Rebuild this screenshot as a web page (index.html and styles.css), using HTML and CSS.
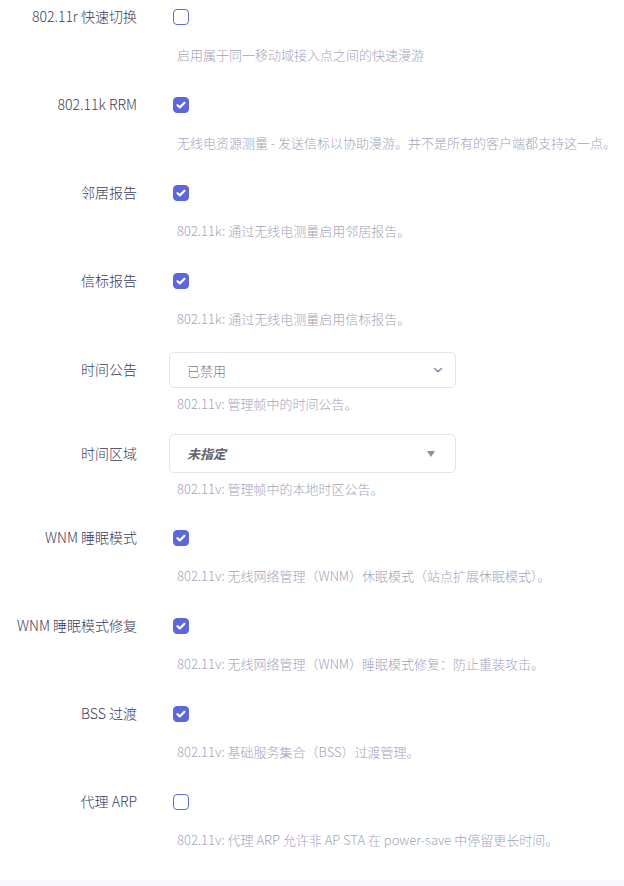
FILE: index.html
```html
<!DOCTYPE html>
<html lang="zh-CN">
<head>
<meta charset="utf-8">
<link rel="stylesheet" href="styles.css">
</head>
<body>
<div class="page">
  <div class="row">
    <div class="label">802.11r 快速切换</div>
    <div class="field">
      <div class="ctrl"><span class="cb"></span></div>
      <div class="desc">启用属于同一移动域接入点之间的快速漫游</div>
    </div>
  </div>
  <div class="row">
    <div class="label">802.11k RRM</div>
    <div class="field">
      <div class="ctrl"><span class="cb on"><svg viewBox="0 0 16 16"><path d="M4.5 8.2l2.3 2.2 4.7-4.7" /></svg></span></div>
      <div class="desc">无线电资源测量 - 发送信标以协助漫游。并不是所有的客户端都支持这一点。</div>
    </div>
  </div>
  <div class="row">
    <div class="label">邻居报告</div>
    <div class="field">
      <div class="ctrl"><span class="cb on"><svg viewBox="0 0 16 16"><path d="M4.5 8.2l2.3 2.2 4.7-4.7" /></svg></span></div>
      <div class="desc">802.11k: 通过无线电测量启用邻居报告。</div>
    </div>
  </div>
  <div class="row">
    <div class="label">信标报告</div>
    <div class="field">
      <div class="ctrl"><span class="cb on"><svg viewBox="0 0 16 16"><path d="M4.5 8.2l2.3 2.2 4.7-4.7" /></svg></span></div>
      <div class="desc">802.11k: 通过无线电测量启用信标报告。</div>
    </div>
  </div>
  <div class="row row-sel">
    <div class="label lab-sel">时间公告</div>
    <div class="field">
      <div class="select">
        <span class="sel-text">已禁用</span>
        <svg class="chev" viewBox="0 0 12 12"><path d="M2.5 4.5l3.5 3.2 3.5-3.2"/></svg>
      </div>
      <div class="desc desc-sel">802.11v: 管理帧中的时间公告。</div>
    </div>
  </div>
  <div class="row row-sel2">
    <div class="label lab-sel2">时间区域</div>
    <div class="field">
      <div class="select select2">
        <span class="sel-text2">未指定</span>
        <span class="tri"></span>
      </div>
      <div class="desc desc-sel">802.11v: 管理帧中的本地时区公告。</div>
    </div>
  </div>
  <div class="row">
    <div class="label">WNM 睡眠模式</div>
    <div class="field">
      <div class="ctrl"><span class="cb on"><svg viewBox="0 0 16 16"><path d="M4.5 8.2l2.3 2.2 4.7-4.7" /></svg></span></div>
      <div class="desc">802.11v: 无线网络管理（WNM）休眠模式（站点扩展休眠模式）。</div>
    </div>
  </div>
  <div class="row">
    <div class="label">WNM 睡眠模式修复</div>
    <div class="field">
      <div class="ctrl"><span class="cb on"><svg viewBox="0 0 16 16"><path d="M4.5 8.2l2.3 2.2 4.7-4.7" /></svg></span></div>
      <div class="desc">802.11v: 无线网络管理（WNM）睡眠模式修复：防止重装攻击。</div>
    </div>
  </div>
  <div class="row">
    <div class="label">BSS 过渡</div>
    <div class="field">
      <div class="ctrl"><span class="cb on"><svg viewBox="0 0 16 16"><path d="M4.5 8.2l2.3 2.2 4.7-4.7" /></svg></span></div>
      <div class="desc">802.11v: 基础服务集合（BSS）过渡管理。</div>
    </div>
  </div>
  <div class="row row-last">
    <div class="label">代理 ARP</div>
    <div class="field">
      <div class="ctrl"><span class="cb"></span></div>
      <div class="desc">802.11v: 代理 ARP 允许非 AP STA 在 power-save 中停留更长时间。</div>
    </div>
  </div>
</div>
<div class="band"></div>
</body>
</html>
```
FILE: styles.css
```css
html, body {
  margin: 0;
  padding: 0;
  background: #ffffff;
}
body {
  font-family: "Noto Sans CJK SC", Inter, sans-serif;
  color: #3d3d5e;
}
.page {
  height: 880px;
  background: #ffffff;
  overflow: hidden;
}
.band {
  height: 6px;
  background: #f7f7fc;
}
.row {
  display: grid;
  grid-template-columns: 169px 1fr;
  margin-bottom: 24px;
}
.label {
  text-align: right;
  padding-right: 32px;
  font-size: 14px;
  font-weight: 300;
  line-height: 33px;
  color: #3b3b5c;
  white-space: nowrap;
}
.field {
  display: flex;
  flex-direction: column;
}
.ctrl {
  height: 34px;
  display: flex;
  align-items: center;
  padding-left: 4px;
}
.cb {
  width: 16px;
  height: 16px;
  box-sizing: border-box;
  border: 1.5px solid #5c6ae0;
  border-radius: 4px;
  background: #fff;
  display: block;
}
.cb.on {
  background: #5c67db;
  border-color: #5c67db;
}
.cb svg {
  display: block;
  width: 16px;
  height: 16px;
  margin: -1.5px;
}
.cb svg path {
  fill: none;
  stroke: #fff;
  stroke-width: 2.2;
  stroke-linecap: round;
  stroke-linejoin: round;
}
.desc {
  margin-top: 12px;
  padding-left: 8px;
  font-size: 13px;
  font-weight: 300;
  line-height: 18px;
  color: #a3a3ba;
  white-space: nowrap;
}
.desc-sel {
  margin-top: 7px;
}
.row-sel {
  margin-bottom: 21px;
}
.row-sel2 {
  margin-bottom: 23px;
}
.lab-sel {
  line-height: 35px;
}
.lab-sel2 {
  line-height: 38px;
}
.select {
  width: 287px;
  height: 36px;
  box-sizing: border-box;
  border: 1px solid #e3e3ec;
  border-radius: 5px;
  display: flex;
  align-items: center;
  justify-content: space-between;
  padding: 0 11px 0 17px;
  font-size: 13px;
}
.select2 {
  height: 39px;
  padding: 0 20px 0 17px;
}
.sel-text {
  color: #7b7b92;
  font-weight: 300;
}
.sel-text2 {
  color: #62626e;
  font-weight: 700;
  font-style: italic;
}
.chev {
  width: 12px;
  height: 12px;
}
.chev path {
  fill: none;
  stroke: #8a90a8;
  stroke-width: 1.6;
  stroke-linecap: round;
  stroke-linejoin: round;
}
.tri {
  width: 0;
  height: 0;
  border-left: 4px solid transparent;
  border-right: 4px solid transparent;
  border-top: 6px solid #8a90a8;
}
```
